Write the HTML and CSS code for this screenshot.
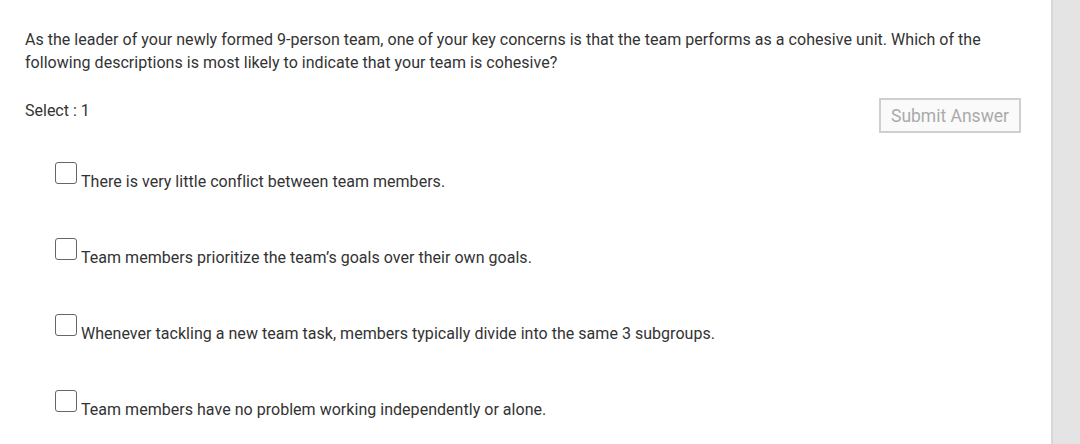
FILE: index.html
```html
<!DOCTYPE html>
<html>
<head>
<meta charset="utf-8">
<link rel="stylesheet" href="styles.css">
</head>
<body>
<div class="page">
  <main class="content">
    <p class="question">As the leader of your newly formed 9-person team, one of your key concerns is that the team performs as a cohesive unit. Which of the following descriptions is most likely to indicate that your team is cohesive?</p>
    <div class="toolbar">
      <span class="select">Select : 1</span>
      <button class="submit" type="button">Submit Answer</button>
    </div>
    <ul class="options">
      <li class="option"><span class="box"></span><span class="label">There is very little conflict between team members.</span></li>
      <li class="option"><span class="box"></span><span class="label">Team members prioritize the team’s goals over their own goals.</span></li>
      <li class="option"><span class="box"></span><span class="label">Whenever tackling a new team task, members typically divide into the same 3 subgroups.</span></li>
      <li class="option"><span class="box"></span><span class="label">Team members have no problem working independently or alone.</span></li>
    </ul>
  </main>
  <aside class="rail"></aside>
</div>
</body>
</html>
```
FILE: styles.css
```css
html, body {
  margin: 0;
  padding: 0;
  height: 100%;
  background: #fff;
}
body {
  font-family: Roboto, "Liberation Sans", sans-serif;
  color: #333;
  overflow: hidden;
}
.page {
  display: flex;
  height: 444px;
}
.content {
  flex: 1;
  padding: 28px 30px 0 25px;
}
.question {
  margin: 0;
  font-size: 16px;
  line-height: 23px;
  letter-spacing: 0.03px;
}
.toolbar {
  display: flex;
  justify-content: space-between;
  align-items: flex-start;
  margin-top: 23px;
}
.select {
  font-size: 16px;
  line-height: 23px;
  padding-top: 2px;
}
.submit {
  margin-top: 1px;
  width: 142px;
  height: 35px;
  border: 2px solid #cfcfcf;
  background: #fafafa;
  color: #aaa;
  font-family: Roboto, "Liberation Sans", sans-serif;
  font-size: 17.5px;
  padding: 0;
}
.options {
  list-style: none;
  margin: 31px 0 0 30px;
  padding: 0;
  display: flex;
  flex-direction: column;
  gap: 53px;
}
.option {
  display: flex;
  align-items: flex-start;
  height: 23px;
}
.box {
  width: 20px;
  height: 20px;
  border: 1.5px solid #666;
  border-radius: 3px;
  flex: none;
  margin-top: -2px;
}
.label {
  font-size: 16px;
  line-height: 23px;
  margin-left: 4px;
  padding-top: 6px;
  letter-spacing: 0.03px;
}
.rail {
  width: 29px;
  flex: none;
  background: #e4e4e4;
  border-left: 2px solid #d8d8d8;
  box-sizing: border-box;
}
```
